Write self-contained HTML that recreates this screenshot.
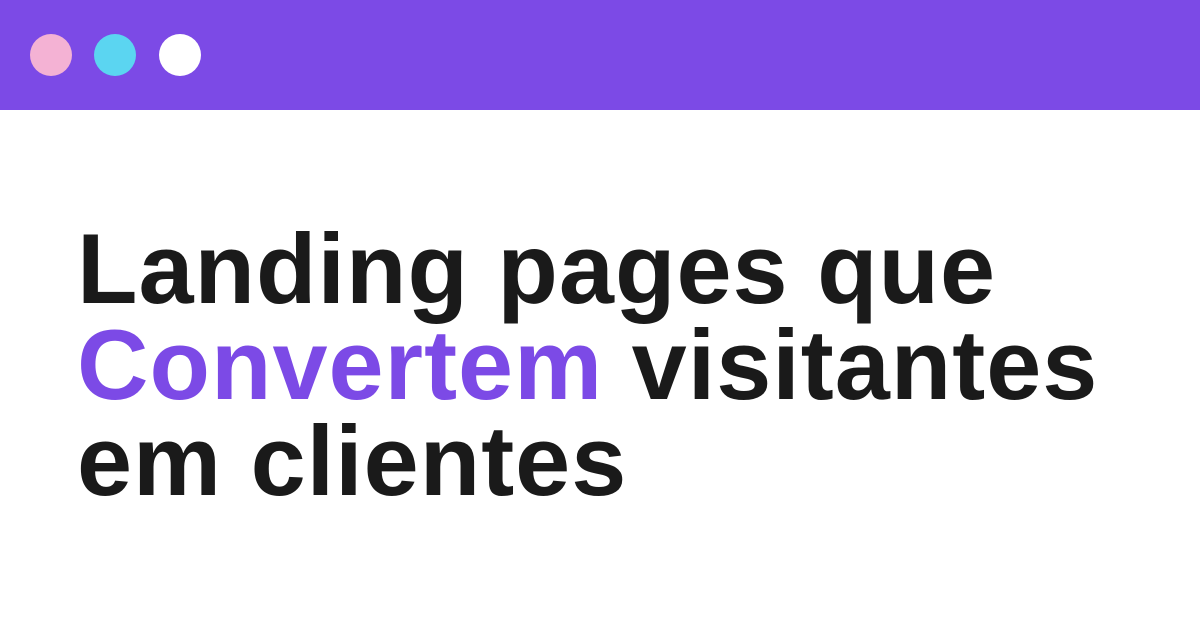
<!DOCTYPE html>
<html><head><meta charset="utf-8"><style>
html,body{margin:0;padding:0;}
body{width:1200px;height:630px;background:#fff;position:relative;overflow:hidden;font-family:"Liberation Sans",sans-serif;}
.bar{position:absolute;left:0;top:0;width:1200px;height:110px;background:#7c4ae6;}
.dot{position:absolute;top:34px;width:42px;height:42px;border-radius:50%;}
.t{position:absolute;left:77px;top:221px;font-size:99px;font-weight:700;line-height:96px;color:#1a1a1a;letter-spacing:1px;white-space:nowrap;}
.p{color:#7c4ae6;}
</style></head><body>
<div class="bar"></div>
<div class="dot" style="left:30px;background:#f4b2d4"></div>
<div class="dot" style="left:94px;background:#5bd5f1"></div>
<div class="dot" style="left:159px;background:#ffffff"></div>
<div class="t">Landing pages que<br><span class="p">Convertem</span> visitantes<br>em clientes</div>
</body></html>
